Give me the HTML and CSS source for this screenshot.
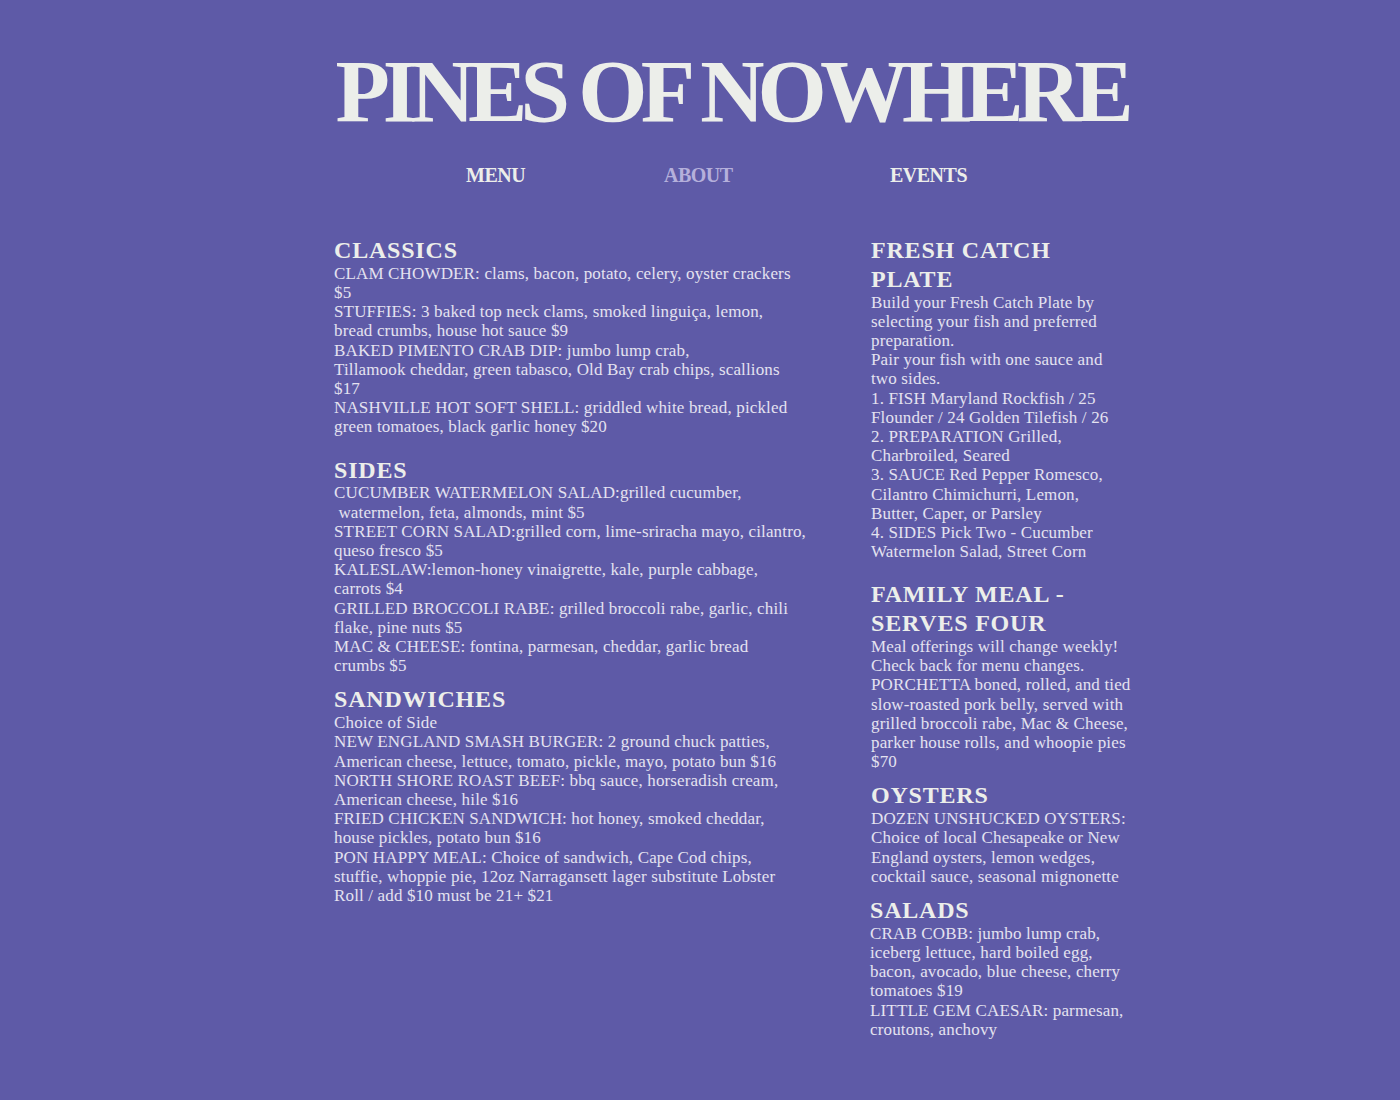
FILE: index.html
```html
<!DOCTYPE html>
<html lang="en">
<head>
<meta charset="utf-8">
<title>Pines of Nowhere</title>
<link rel="stylesheet" href="styles.css">
</head>
<body>
<div class="page">
  <header class="masthead">
    <h1 class="title">PINES OF NOWHERE</h1>
    <nav class="nav">
      <a class="nav-item nav-menu" href="#">MENU</a>
      <a class="nav-item nav-about" href="#">ABOUT</a>
      <a class="nav-item nav-events" href="#">EVENTS</a>
    </nav>
  </header>

  <main class="menu">
    <div class="col col-left">
      <section class="sec">
        <h2 class="sec-title">CLASSICS</h2>
        <p class="txt">CLAM CHOWDER: clams, bacon, potato, celery, oyster crackers<br>$5<br>STUFFIES: 3 baked top neck clams, smoked linguiça, lemon,<br>bread crumbs, house hot sauce $9<br>BAKED PIMENTO CRAB DIP: jumbo lump crab,<br>Tillamook cheddar, green tabasco, Old Bay crab chips, scallions<br>$17<br>NASHVILLE HOT SOFT SHELL: griddled white bread, pickled<br>green tomatoes, black garlic honey $20</p>
      </section>
      <section class="sec gap-lg">
        <h2 class="sec-title">SIDES</h2>
        <p class="txt">CUCUMBER WATERMELON SALAD:grilled cucumber,<br>&nbsp;watermelon, feta, almonds, mint $5<br>STREET CORN SALAD:grilled corn, lime-sriracha mayo, cilantro,<br>queso fresco $5<br>KALESLAW:lemon-honey vinaigrette, kale, purple cabbage,<br>carrots $4<br>GRILLED BROCCOLI RABE: grilled broccoli rabe, garlic, chili<br>flake, pine nuts $5<br>MAC &amp; CHEESE: fontina, parmesan, cheddar, garlic bread<br>crumbs $5</p>
      </section>
      <section class="sec gap-sm">
        <h2 class="sec-title">SANDWICHES</h2>
        <p class="txt">Choice of Side<br>NEW ENGLAND SMASH BURGER: 2 ground chuck patties,<br>American cheese, lettuce, tomato, pickle, mayo, potato bun $16<br>NORTH SHORE ROAST BEEF: bbq sauce, horseradish cream,<br>American cheese, hile $16<br>FRIED CHICKEN SANDWICH: hot honey, smoked cheddar,<br>house pickles, potato bun $16<br>PON HAPPY MEAL: Choice of sandwich, Cape Cod chips,<br>stuffie, whoppie pie, 12oz Narragansett lager substitute Lobster<br>Roll / add $10 must be 21+ $21</p>
      </section>
    </div>

    <div class="col col-right">
      <section class="sec">
        <h2 class="sec-title">FRESH CATCH<br>PLATE</h2>
        <p class="txt">Build your Fresh Catch Plate by<br>selecting your fish and preferred<br>preparation.<br>Pair your fish with one sauce and<br>two sides.<br>1. FISH Maryland Rockfish / 25<br>Flounder / 24 Golden Tilefish / 26<br>2. PREPARATION Grilled,<br>Charbroiled, Seared<br>3. SAUCE Red Pepper Romesco,<br>Cilantro Chimichurri, Lemon,<br>Butter, Caper, or Parsley<br>4. SIDES Pick Two - Cucumber<br>Watermelon Salad, Street Corn</p>
      </section>
      <section class="sec gap-lg">
        <h2 class="sec-title">FAMILY MEAL -<br>SERVES FOUR</h2>
        <p class="txt">Meal offerings will change weekly!<br>Check back for menu changes.<br>PORCHETTA boned, rolled, and tied<br>slow-roasted pork belly, served with<br>grilled broccoli rabe, Mac &amp; Cheese,<br>parker house rolls, and whoopie pies<br>$70</p>
      </section>
      <section class="sec gap-sm">
        <h2 class="sec-title">OYSTERS</h2>
        <p class="txt">DOZEN UNSHUCKED OYSTERS:<br>Choice of local Chesapeake or New<br>England oysters, lemon wedges,<br>cocktail sauce, seasonal mignonette</p>
      </section>
      <section class="sec gap-sm salads">
        <h2 class="sec-title">SALADS</h2>
        <p class="txt">CRAB COBB: jumbo lump crab,<br>iceberg lettuce, hard boiled egg,<br>bacon, avocado, blue cheese, cherry<br>tomatoes $19<br>LITTLE GEM CAESAR: parmesan,<br>croutons, anchovy</p>
      </section>
    </div>
  </main>
</div>
</body>
</html>
```

FILE: styles.css
```css
html, body {
  margin: 0;
  padding: 0;
}

body {
  background: #5e5aa7;
  color: #e4e2f0;
  font-family: "Liberation Serif", "DejaVu Serif", serif;
}

.page {
  width: 794px;
  margin-left: 334px;
  padding-bottom: 40px;
}

.masthead {
  display: flex;
  flex-direction: column;
}

.title {
  margin: 47px 0 0;
  font-size: 89px;
  line-height: 89px;
  font-weight: 700;
  letter-spacing: -6.9px;
  text-align: center;
  color: #eceeea;
  white-space: nowrap;
}

.nav {
  display: flex;
  margin-top: 27px;
  padding-left: 132px;
}

.nav-item {
  font-size: 20px;
  line-height: 24px;
  font-weight: 700;
  color: #eceeea;
  text-decoration: none;
  letter-spacing: -0.5px;
}

.nav-menu { width: 198px; }
.nav-about { width: 226px; color: #b5b0db; }

.menu {
  display: grid;
  grid-template-columns: 470px 1fr;
  column-gap: 67px;
  margin-top: 48px;
}

.sec-title {
  margin: 0;
  padding-top: 1px;
  margin-bottom: -1px;
  font-size: 24px;
  line-height: 28.8px;
  font-weight: 700;
  letter-spacing: 0.8px;
  color: #eceeea;
  white-space: nowrap;
}

.txt {
  margin: 0;
  font-size: 17px;
  line-height: 19.2px;
  letter-spacing: 0.15px;
  white-space: nowrap;
}

.gap-lg { margin-top: 18px; }
.gap-sm { margin-top: 9px; }
.salads { margin-left: -1px; }
```
